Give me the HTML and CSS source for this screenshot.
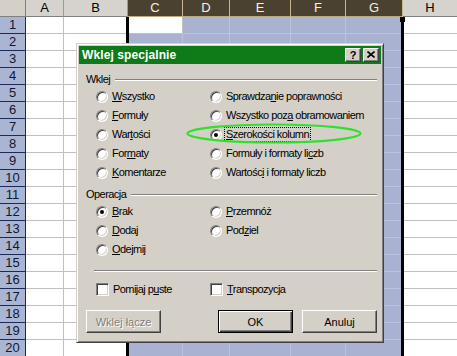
FILE: index.html
```html
<!DOCTYPE html>
<html lang="pl">
<head>
<meta charset="utf-8">
<title>Wklej specjalnie</title>
<link rel="stylesheet" href="styles.css">
</head>
<body>
<div class="app">
  <div class="sheet">
    <div class="corner"></div>
    <div class="ch">A</div><div class="ch">B</div><div class="ch sel">C</div><div class="ch sel">D</div><div class="ch sel">E</div><div class="ch sel">F</div><div class="ch sel">G</div><div class="ch">H</div>

    <div class="rh">1</div><div class="c"></div><div class="c"></div><div class="c act"></div><div class="c s"></div><div class="c s"></div><div class="c s"></div><div class="c s"></div><div class="c"></div>
    <div class="rh">2</div><div class="c"></div><div class="c"></div><div class="c s"></div><div class="c s"></div><div class="c s"></div><div class="c s"></div><div class="c s"></div><div class="c"></div>
    <div class="rh">3</div><div class="c"></div><div class="c"></div><div class="c s"></div><div class="c s"></div><div class="c s"></div><div class="c s"></div><div class="c s"></div><div class="c"></div>
    <div class="rh">4</div><div class="c"></div><div class="c"></div><div class="c s"></div><div class="c s"></div><div class="c s"></div><div class="c s"></div><div class="c s"></div><div class="c"></div>
    <div class="rh">5</div><div class="c"></div><div class="c"></div><div class="c s"></div><div class="c s"></div><div class="c s"></div><div class="c s"></div><div class="c s"></div><div class="c"></div>
    <div class="rh">6</div><div class="c"></div><div class="c"></div><div class="c s"></div><div class="c s"></div><div class="c s"></div><div class="c s"></div><div class="c s"></div><div class="c"></div>
    <div class="rh">7</div><div class="c"></div><div class="c"></div><div class="c s"></div><div class="c s"></div><div class="c s"></div><div class="c s"></div><div class="c s"></div><div class="c"></div>
    <div class="rh">8</div><div class="c"></div><div class="c"></div><div class="c s"></div><div class="c s"></div><div class="c s"></div><div class="c s"></div><div class="c s"></div><div class="c"></div>
    <div class="rh">9</div><div class="c"></div><div class="c"></div><div class="c s"></div><div class="c s"></div><div class="c s"></div><div class="c s"></div><div class="c s"></div><div class="c"></div>
    <div class="rh">10</div><div class="c"></div><div class="c"></div><div class="c s"></div><div class="c s"></div><div class="c s"></div><div class="c s"></div><div class="c s"></div><div class="c"></div>
    <div class="rh">11</div><div class="c"></div><div class="c"></div><div class="c s"></div><div class="c s"></div><div class="c s"></div><div class="c s"></div><div class="c s"></div><div class="c"></div>
    <div class="rh">12</div><div class="c"></div><div class="c"></div><div class="c s"></div><div class="c s"></div><div class="c s"></div><div class="c s"></div><div class="c s"></div><div class="c"></div>
    <div class="rh">13</div><div class="c"></div><div class="c"></div><div class="c s"></div><div class="c s"></div><div class="c s"></div><div class="c s"></div><div class="c s"></div><div class="c"></div>
    <div class="rh">14</div><div class="c"></div><div class="c"></div><div class="c s"></div><div class="c s"></div><div class="c s"></div><div class="c s"></div><div class="c s"></div><div class="c"></div>
    <div class="rh">15</div><div class="c"></div><div class="c"></div><div class="c s"></div><div class="c s"></div><div class="c s"></div><div class="c s"></div><div class="c s"></div><div class="c"></div>
    <div class="rh">16</div><div class="c"></div><div class="c"></div><div class="c s"></div><div class="c s"></div><div class="c s"></div><div class="c s"></div><div class="c s"></div><div class="c"></div>
    <div class="rh">17</div><div class="c"></div><div class="c"></div><div class="c s"></div><div class="c s"></div><div class="c s"></div><div class="c s"></div><div class="c s"></div><div class="c"></div>
    <div class="rh">18</div><div class="c"></div><div class="c"></div><div class="c s"></div><div class="c s"></div><div class="c s"></div><div class="c s"></div><div class="c s"></div><div class="c"></div>
    <div class="rh">19</div><div class="c"></div><div class="c"></div><div class="c s"></div><div class="c s"></div><div class="c s"></div><div class="c s"></div><div class="c s"></div><div class="c"></div>
    <div class="rh">20</div><div class="c"></div><div class="c"></div><div class="c s"></div><div class="c s"></div><div class="c s"></div><div class="c s"></div><div class="c s"></div><div class="c"></div>
  </div>

  <div class="selbox"><span class="handle"></span></div>

  <div class="dialog">
    <div class="title">
      <span class="ttext">Wklej specjalnie</span>
      <div class="tbtns">
        <span class="tb q">?</span>
        <span class="tb"><svg width="8" height="7" viewBox="0 0 8 7"><path d="M0.5 0.5 L7.5 6.5 M7.5 0.5 L0.5 6.5" stroke="#000" stroke-width="1.6" fill="none"/></svg></span>
      </div>
    </div>
    <div class="body">
      <div class="grp"><span>Wklej</span><i class="line"></i></div>
      <div class="opts">
        <div class="opt"><span class="rb"></span><span><u>W</u>szystko</span></div>
        <div class="opt"><span class="rb"></span><span>Sprawdza<u>n</u>ie poprawności</span></div>
        <div class="opt"><span class="rb"></span><span><u>F</u>ormuły</span></div>
        <div class="opt"><span class="rb"></span><span>Wszystko poz<u>a</u> obramowaniem</span></div>
        <div class="opt"><span class="rb"></span><span>War<u>t</u>ości</span></div>
        <div class="opt"><span class="rb on"></span><span class="focus"><u>S</u>zerokości kolumn</span></div>
        <div class="opt"><span class="rb"></span><span>For<u>m</u>aty</span></div>
        <div class="opt"><span class="rb"></span><span>Formuły i formaty li<u>c</u>zb</span></div>
        <div class="opt"><span class="rb"></span><span><u>K</u>omentarze</span></div>
        <div class="opt"><span class="rb"></span><span>Wartośc<u>i</u> i formaty liczb</span></div>
      </div>
      <div class="grp grp2"><span>Operacja</span><i class="line"></i></div>
      <div class="opts">
        <div class="opt"><span class="rb on"></span><span><u>B</u>rak</span></div>
        <div class="opt"><span class="rb"></span><span><u>P</u>rzemnóż</span></div>
        <div class="opt"><span class="rb"></span><span><u>D</u>odaj</span></div>
        <div class="opt"><span class="rb"></span><span>Pod<u>z</u>iel</span></div>
        <div class="opt"><span class="rb"></span><span><u>O</u>dejmij</span></div>
      </div>
      <i class="sep"></i>
      <div class="opts checks">
        <div class="opt"><span class="cb"></span><span>Pomijaj p<u>u</u>ste</span></div>
        <div class="opt"><span class="cb"></span><span><u>T</u>ranspozycja</span></div>
      </div>
      <div class="buttons">
        <span class="btn dis">Wklej łącze</span>
        <div class="btngrp">
          <span class="btn def">OK</span>
          <span class="btn">Anuluj</span>
        </div>
      </div>
    </div>
  </div>

  <svg class="mark" width="180" height="24" viewBox="0 0 180 24"><ellipse cx="89" cy="11.5" rx="86.5" ry="9" fill="none" stroke="#2fe02f" stroke-width="2.2"/></svg>
</div>
</body>
</html>
```
FILE: styles.css
```css
* { box-sizing: border-box; }
html, body { margin: 0; padding: 0; }
body {
  width: 457px;
  height: 356px;
  overflow: hidden;
  background: #fff;
  font-family: "Liberation Sans", Arial, sans-serif;
}
.app { position: relative; width: 457px; height: 356px; overflow: hidden; }

.sheet {
  display: grid;
  grid-template-columns: 26px 38px 64px 55px 47px 61px 55px 57px 55px;
  grid-template-rows: 17px;
  grid-auto-rows: 17px;
}
.corner {
  background: #d4d0c8;
  border-right: 1px solid #808080;
  border-bottom: 1px solid #808080;
}
.ch {
  background: #d6d3ce;
  border-right: 1px solid #9d9b96;
  border-bottom: 1px solid #808080;
  color: #000;
  font-size: 13px;
  line-height: 16px;
  text-align: center;
}
.ch.sel {
  background: #4a4131;
  color: #f4f0e8;
  border-right-color: #c8b68e;
  border-bottom-color: #bba982;
}
.rh {
  background: #a9b5d3;
  border-right: 1px solid #1c2a5a;
  border-bottom: 1px solid #1c2a5a;
  color: #101830;
  font-size: 13px;
  line-height: 16px;
  text-align: center;
}
.c {
  background: #fff;
  border-right: 1px solid #c0c0c0;
  border-bottom: 1px solid #c0c0c0;
}
.c.s {
  background: #a9b2d1;
  border-right-color: #bcc3dc;
  border-bottom-color: #bcc3dc;
}
.c.act { background: #fff; }

.selbox {
  position: absolute;
  left: 126px;
  top: 17px;
  width: 278px;
  height: 345px;
  border-left: 3px solid #000;
  border-right: 3px solid #000;
}
.handle {
  position: absolute;
  right: -4px;
  top: 0;
  width: 5px;
  height: 5px;
  background: #000;
}

/* dialog */
.dialog {
  position: absolute;
  left: 76px;
  top: 43px;
  width: 308px;
  background: #d4d0c8;
  border: 1px solid;
  border-color: #d4d0c8 #404040 #404040 #d4d0c8;
  box-shadow: inset 1px 1px #fff, inset -1px -1px #808080;
  padding: 2px;
  font-size: 11px;
  color: #000;
}
.title {
  height: 18px;
  background: #0e7a18;
  display: flex;
  align-items: center;
  justify-content: space-between;
  padding: 0 2px 0 3px;
}
.ttext {
  color: #fff;
  font-weight: bold;
  font-size: 12px;
  letter-spacing: 0.1px;
}
.tbtns { display: flex; gap: 2px; }
.tb {
  width: 16px;
  height: 14px;
  background: #d4d0c8;
  border: 1px solid;
  border-color: #fff #404040 #404040 #fff;
  box-shadow: inset -1px -1px #808080;
  display: flex;
  align-items: center;
  justify-content: center;
  padding-bottom: 1px;
}
.tb.q {
  font-weight: bold;
  font-size: 11px;
  line-height: 12px;
  color: #000;
}

.body { padding: 9px 4px 7px 7px; letter-spacing: -0.55px; }
.grp {
  display: flex;
  align-items: center;
  height: 13px;
  line-height: 13px;
}
.grp .line {
  flex: 1;
  height: 2px;
  margin-left: 5px;
  border-top: 1px solid #808080;
  border-bottom: 1px solid #fff;
}
.grp2 { margin-top: 6px; }
.opts {
  display: grid;
  grid-template-columns: 114px 1fr;
  grid-auto-rows: 19px;
  padding-left: 10px;
  margin-top: 1px;
}
.opt {
  display: flex;
  align-items: center;
  gap: 4px;
  white-space: nowrap;
  line-height: 13px;
}
.rb {
  flex: none;
  position: relative;
  width: 12px;
  height: 12px;
  border-radius: 50%;
  background: #fff;
  border: 1px solid;
  border-color: #808080 #fff #fff #808080;
  box-shadow: inset 1px 1px #404040, inset -1px -1px #d4d0c8;
}
.rb.on::after {
  content: "";
  position: absolute;
  left: 3px;
  top: 3px;
  width: 4px;
  height: 4px;
  border-radius: 50%;
  background: #000;
}
.cb {
  flex: none;
  width: 13px;
  height: 13px;
  background: #fff;
  border: 1px solid;
  border-color: #808080 #fff #fff #808080;
  box-shadow: inset 1px 1px #404040, inset -1px -1px #d4d0c8;
}
.focus {
  outline: 1px dotted #000;
  outline-offset: 0;
  padding: 0 1px;
  margin-left: -1px;
}
.sep {
  display: block;
  height: 2px;
  margin: 11px 0 0 8px;
  border-top: 1px solid #808080;
  border-bottom: 1px solid #fff;
}
.checks { margin-top: 8px; }
.buttons {
  display: flex;
  justify-content: space-between;
  margin-top: 11px;
}
.btngrp { display: flex; gap: 9px; }
.btn {
  width: 75px;
  height: 23px;
  display: flex;
  align-items: center;
  justify-content: center;
  background: #d4d0c8;
  border: 1px solid;
  border-color: #fff #404040 #404040 #fff;
  box-shadow: inset -1px -1px #808080;
  letter-spacing: 0;
}
.btn.def {
  border: 1px solid #000;
  box-shadow: inset 1px 1px #fff, inset -1px -1px #404040, inset -2px -2px #808080;
}
.btn.dis {
  color: #808080;
  text-shadow: 1px 1px #fff;
}

.mark {
  position: absolute;
  left: 185px;
  top: 122px;
}
```
